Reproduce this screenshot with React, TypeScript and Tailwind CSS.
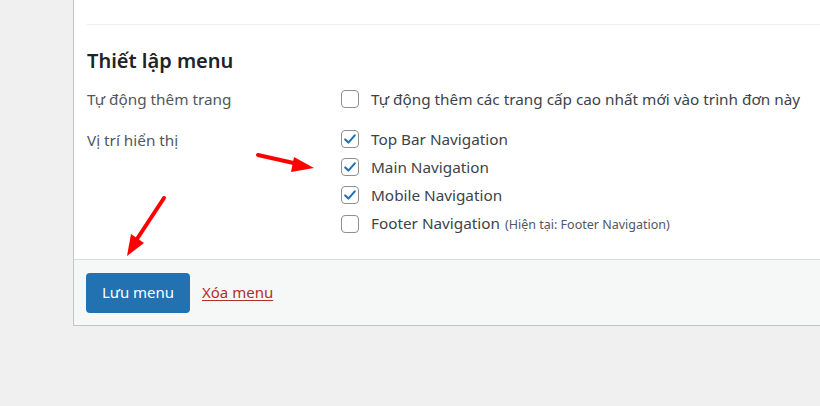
import React from 'react';

const font = { fontFamily: '"Noto Sans", "Open Sans", sans-serif' };

function Check({ checked }: { checked: boolean }) {
  return (
    <span className="flex h-[18px] w-[18px] shrink-0 items-center justify-center rounded-[4px] border border-[#8c8f94] bg-white">
      {checked && (
        <svg viewBox="0 0 20 20" className="h-[16px] w-[16px]">
          <path d="M4 10.5l4 4 8-9" fill="none" stroke="#2271b1" strokeWidth="2.6" strokeLinecap="round" strokeLinejoin="round" />
        </svg>
      )}
    </span>
  );
}

const locations = [
  { name: 'Top Bar Navigation', checked: true },
  { name: 'Main Navigation', checked: true },
  { name: 'Mobile Navigation', checked: true },
  { name: 'Footer Navigation', checked: false, note: '(Hiện tại: Footer Navigation)' },
];

export default function App() {
  return (
    <div className="relative h-[406px] w-[820px] overflow-hidden bg-[#f0f0f1]" style={font}>
      {/* Menu settings panel */}
      <div className="ml-[73px] w-[800px] border-b border-l border-[#c3c4c7] bg-white">
        <div className="pl-[13px]">
          <div className="h-[25px] border-b border-[#f0f0f1]" />
          <h3 className="mt-[21px] text-[20px] leading-[30px] font-semibold text-[#1d2327]">Thiết lập menu</h3>

          <div className="mt-[13px] flex">
            <div className="w-[254px] text-[15.3px] leading-[20px] text-[#50575e]">Tự động thêm trang</div>
            <label className="flex items-center gap-[12px] text-[15.3px] leading-[20px] text-[#3c434a]">
              <Check checked={false} />
              <span>Tự động thêm các trang cấp cao nhất mới vào trình đơn này</span>
            </label>
          </div>

          <div className="mt-[20px] flex pb-[24px]">
            <div className="w-[254px] pt-[1px] text-[15.3px] leading-[20px] text-[#50575e]">Vị trí hiển thị</div>
            <div className="flex flex-col gap-[8px]">
              {locations.map((l) => (
                <label key={l.name} className="flex items-center gap-[12px] text-[15.3px] leading-[20px] text-[#3c434a]">
                  <Check checked={l.checked} />
                  <span>
                    {l.name}
                    {l.note && <span className="ml-[5px] text-[12.5px] text-[#50575e]">{l.note}</span>}
                  </span>
                </label>
              ))}
            </div>
          </div>
        </div>

        {/* Footer actions */}
        <div className="flex h-[66px] items-center gap-[12px] border-t border-[#dcdcde] bg-[#f6f7f7] pl-[12px]">
          <button className="h-[40px] w-[104px] rounded-[4px] bg-[#2271b1] text-[15px] text-white">Lưu menu</button>
          <a className="text-[15px] text-[#b32d2e] underline underline-offset-2">Xóa menu</a>
        </div>
      </div>

      {/* Annotation arrows */}
      <svg className="pointer-events-none absolute left-0 top-0" width="820" height="406">
        <line x1="258" y1="155" x2="298" y2="164" stroke="#ff0000" strokeWidth="4" strokeLinecap="round" />
        <polygon points="314,168 294,157 291,172" fill="#ff0000" />
        <line x1="164" y1="198" x2="137" y2="239" stroke="#ff0000" strokeWidth="4" strokeLinecap="round" />
        <polygon points="127,256 131,234 144,243" fill="#ff0000" />
      </svg>
    </div>
  );
}
